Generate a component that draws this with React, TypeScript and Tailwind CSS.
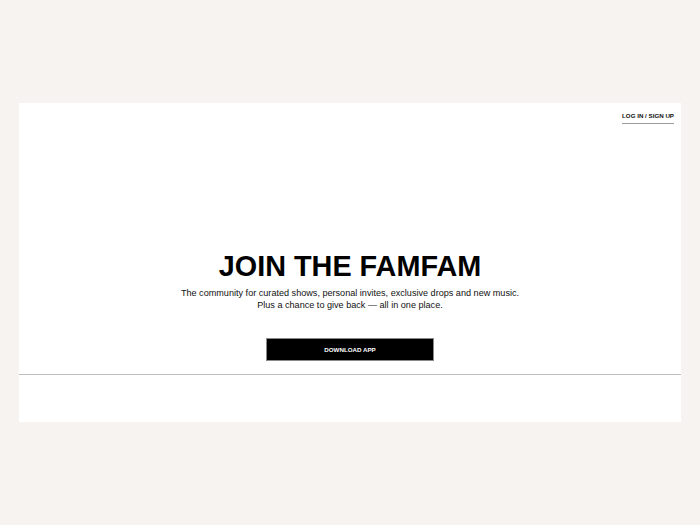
import React from 'react';

const App: React.FC = () => {
  return (
    <div className="min-h-[525px] w-full bg-[#f7f3f0] px-[19px] pt-[103px] pb-[103px]" style={{ fontFamily: '"Liberation Sans", Arial, sans-serif' }}>
      <div className="bg-white h-[319px] flex flex-col">
        {/* Hero */}
        <div className="h-[272px] flex flex-col border-b border-[#bdbdbd]">
          <div className="flex justify-end pt-[8px] pr-[7px]">
            <a href="#" className="text-[6.2px] leading-[9px] font-bold text-[#111] pb-[3px] border-b border-[#9a9a9a]">
              LOG IN / SIGN UP
            </a>
          </div>
          <div className="flex flex-col items-center mt-[126px]">
            <h1 className="text-[28.8px] leading-[32px] font-bold text-black">JOIN THE FAMFAM</h1>
            <p className="mt-[5px] text-[9.1px] leading-[12px] text-[#111] text-center">
              The community for curated shows, personal invites, exclusive drops and new music.
              <br />
              Plus a chance to give back — all in one place.
            </p>
            <button className="mt-[27px] w-[168px] h-[23px] bg-black border border-[#8a8a8a] text-white text-[6.2px] font-bold">
              DOWNLOAD APP
            </button>
          </div>
        </div>
        <div className="flex-1" />
      </div>
    </div>
  );
};

export default App;
